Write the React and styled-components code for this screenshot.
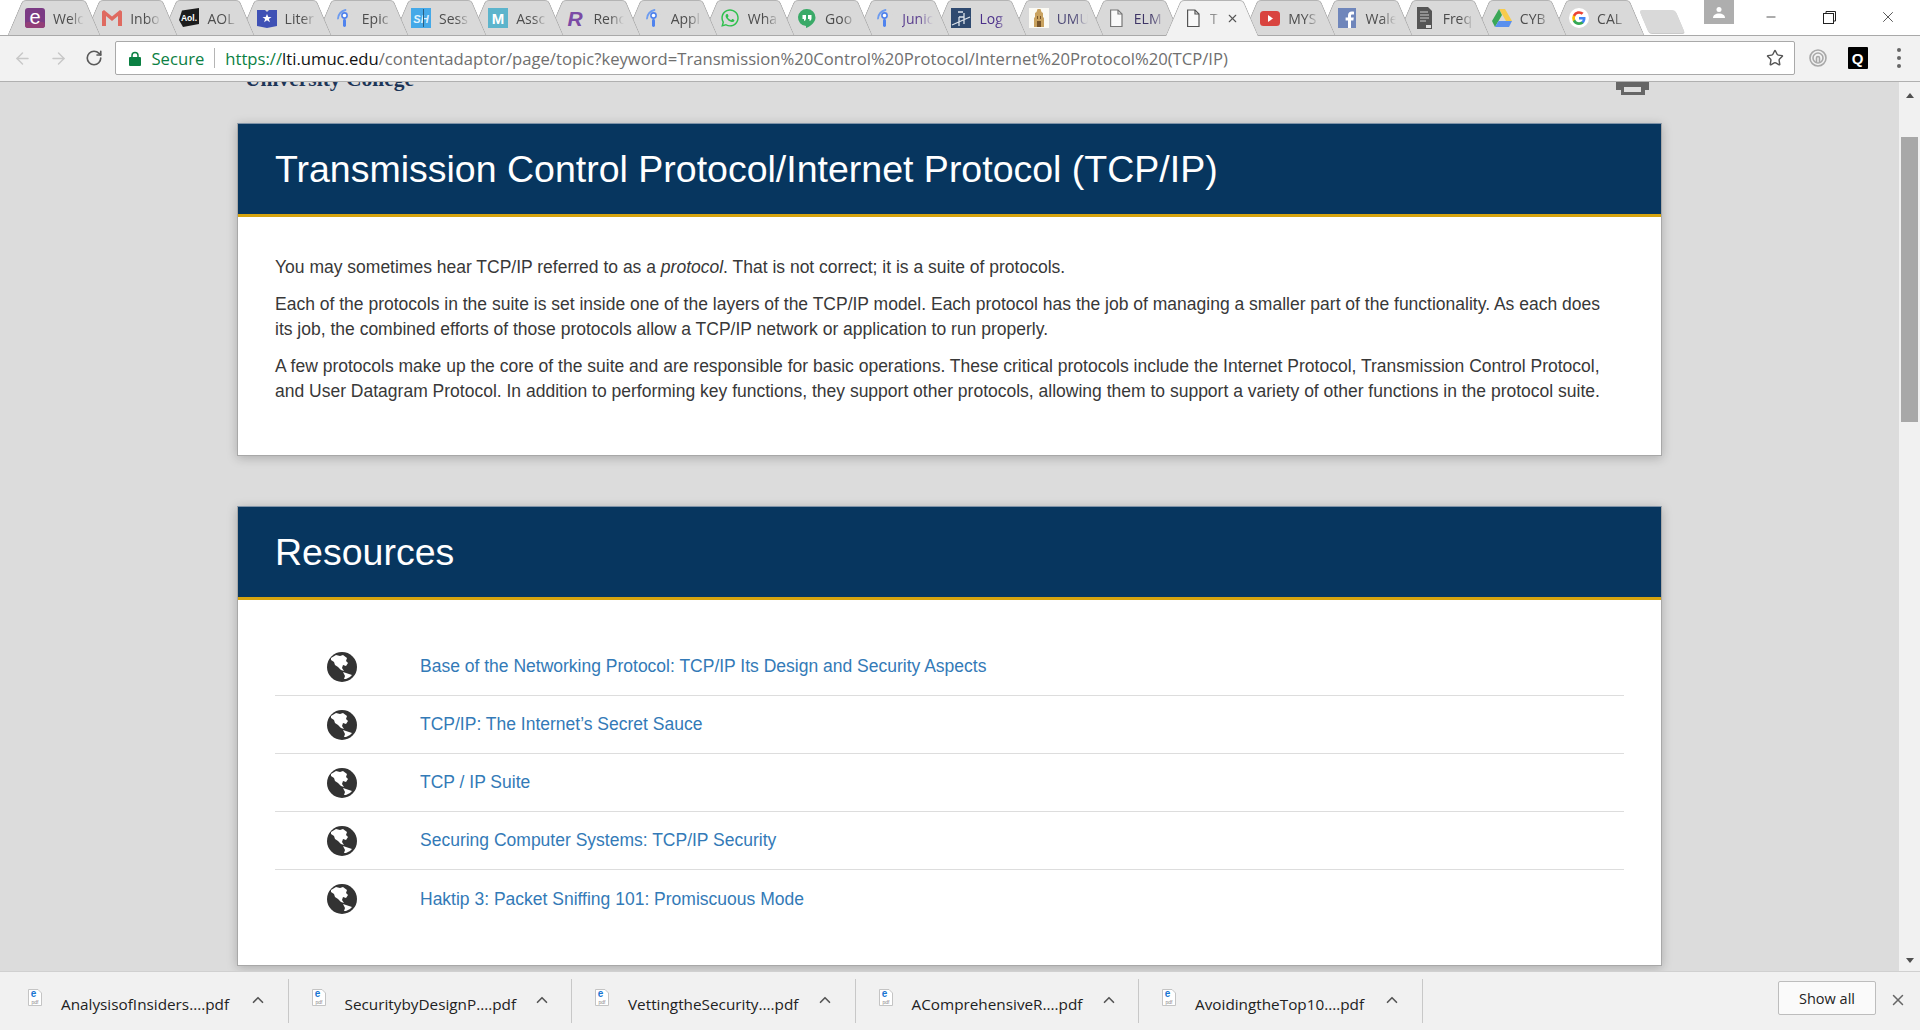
import React from 'react';
import styled, { createGlobalStyle } from 'styled-components';
import { ArrowLeft, ArrowRight, RotateCw, Star, ChevronUp, X, Minus } from 'lucide-react';
import { FaWhatsapp } from 'react-icons/fa';

const GlobalStyle = createGlobalStyle`
  html, body { margin: 0; padding: 0; height: 100%; overflow: hidden; }
  * { box-sizing: border-box; }
  body { font-family: "Liberation Sans", Arial, sans-serif; background: #dcdcdc; }
`;

const UI_FONT = '"Open Sans", "Noto Sans", sans-serif';

const Window = styled.div`
  width: 1920px;
  height: 1030px;
  display: flex;
  flex-direction: column;
  overflow: hidden;
`;

/* tab strip */
const TabStrip = styled.div`
  height: 36px;
  flex: none;
  display: flex;
  align-items: flex-end;
  padding-left: 7px;
  background: #fff;
  border-bottom: 1px solid #a9a9a9;
  position: relative;
`;

const Tab = styled.div`
  position: relative;
  z-index: ${p => (p.$active ? 50 : 40 - p.$index)};
  width: 93px;
  height: ${p => (p.$active ? '36px' : '35px')};
  margin-right: -15.8px;
  margin-bottom: ${p => (p.$active ? '-1px' : '0')};
  padding: 1px 0 0 18px;
  flex: none;
  display: flex;
  align-items: center;
  font-family: ${UI_FONT};
  font-size: 14px;
  color: ${p => p.$tint || '#4d4d4d'};

  &::before,
  &::after {
    content: '';
    position: absolute;
    top: 0;
    bottom: 0;
    width: 50%;
    background: ${p => (p.$active ? '#f2f2f2' : '#d9d9d9')};
    border-top: 1px solid #b4b4b4;
  }
  &::before {
    left: 8px;
    transform: skewX(-23deg);
    border-left: 1px solid #a9a9a9;
    border-top-left-radius: 4px;
  }
  &::after {
    right: 8px;
    transform: skewX(23deg);
    border-right: 1px solid #a9a9a9;
    border-top-right-radius: 4px;
  }
`;

const TabIcon = styled.span`
  position: relative;
  z-index: 1;
  width: 20px;
  height: 20px;
  flex: none;
  display: flex;
  align-items: center;
  justify-content: center;
  svg { display: block; }
`;

const TabTitle = styled.span`
  position: relative;
  z-index: 1;
  margin-left: 8px;
  width: 31px;
  overflow: hidden;
  white-space: nowrap;
  -webkit-mask-image: linear-gradient(to right, #000 55%, transparent 100%);
  mask-image: linear-gradient(to right, #000 55%, transparent 100%);
`;

const ActiveTitle = styled(TabTitle)`
  width: 9px;
  margin-left: 7px;
  opacity: .6;
`;

const TabClose = styled.span`
  position: relative;
  z-index: 1;
  margin-left: 7px;
  display: flex;
  color: #555;
`;

const NewTab = styled.div`
  margin: 0 0 2px 16px;
  width: 36px;
  height: 23px;
  flex: none;
  background: #d9d9d9;
  border-radius: 3px;
  transform: skewX(23deg);
  box-shadow: 0 1px 0 #c9c9c9;
`;

const WindowControls = styled.div`
  margin-left: auto;
  align-self: flex-start;
  display: flex;
  height: 35px;
  padding-right: 3px;
`;

const UserBadge = styled.div`
  width: 30px;
  height: 24px;
  margin-right: 8px;
  background: #aeaeae;
  display: flex;
  align-items: center;
  justify-content: center;
`;

const WinButton = styled.div`
  width: 58.5px;
  height: 34px;
  display: flex;
  align-items: center;
  justify-content: center;
  color: #222;
`;

/* toolbar */
const Toolbar = styled.div`
  height: 46px;
  flex: none;
  display: flex;
  align-items: center;
  padding: 0 0 1px 4px;
  background: #f2f2f2;
  border-bottom: 1px solid #b0b0b0;
`;

const NavButton = styled.div`
  width: 36px;
  display: flex;
  justify-content: center;
  color: ${p => (p.$enabled ? '#5a5a5a' : '#c8c8c8')};
`;

const Omnibox = styled.div`
  margin-left: 3px;
  width: 1680px;
  height: 34px;
  display: flex;
  align-items: center;
  padding: 0 10px 0 13px;
  background: #fff;
  border: 1px solid #a9a9a9;
  border-radius: 2px;
  font-family: ${UI_FONT};
  font-size: 16.65px;
  white-space: nowrap;
`;

const Secure = styled.span`
  margin-left: 10.5px;
  color: #0b8043;
`;

const OmniDivider = styled.span`
  width: 1px;
  height: 20px;
  margin: 0 10px;
  background: #b5b5b5;
`;

const Scheme = styled.span`
  color: #0b8043;
`;
const Host = styled.span`
  color: #111;
`;
const UrlRest = styled.span`
  color: #6f6f6f;
`;

const StarButton = styled.span`
  margin-left: auto;
  display: flex;
  color: #555;
`;

const ToolbarTail = styled.div`
  flex: 1;
  display: flex;
  align-items: center;
  justify-content: space-between;
  padding: 0 19px 0 13px;
`;

const ExtButton = styled.span`
  width: 20px;
  height: 22px;
  display: flex;
  align-items: center;
  justify-content: center;
`;

const QButton = styled.span`
  width: 20px;
  height: 22px;
  margin-right: 10px;
  background: #000;
  border-radius: 1px;
  color: #fff;
  font: bold 15px "Liberation Sans", sans-serif;
  display: flex;
  align-items: center;
  justify-content: center;
`;

const MenuDots = styled.span`
  width: 4px;
  display: flex;
  flex-direction: column;
  gap: 4px;
  i {
    width: 4px;
    height: 4px;
    border-radius: 50%;
    background: #666;
  }
`;

/* page */
const Viewport = styled.div`
  flex: 1;
  min-height: 0;
  display: flex;
`;

const Page = styled.main`
  flex: 1;
  overflow: hidden;
  background: #dcdcdc;
`;

const Wrap = styled.div`
  width: 1425px;
  margin: 0 auto;
`;

const SiteHeader = styled.header`
  height: 41px;
  display: flex;
  justify-content: space-between;
  align-items: flex-start;
  padding: 0 13px 0 8px;
`;

const Logo = styled.div`
  margin-top: -14px;
  font: bold 21.5px/22px "Liberation Serif", serif;
  color: #1d3557;
`;

const Card = styled.section`
  margin-bottom: 50px;
  background: #fff;
  border: 1px solid #a8a8a8;
  border-top-color: #7f93a8;
  box-shadow: 0 2px 10px rgba(0, 0, 0, .22);
`;

const CardHeader = styled.h1`
  margin: 0;
  height: 93px;
  padding: 0 37px;
  display: flex;
  align-items: center;
  background: #07365f;
  border-bottom: 3px solid #d6a40f;
  color: #fff;
  font-size: 37.5px;
  font-weight: 400;
`;

const Body = styled.div`
  padding: 38px 41px 51px 37px;
  font-size: 17.5px;
  line-height: 25px;
  color: #383838;
  p { margin: 0 0 12px; }
  p:last-child { margin: 0; }
`;

const ResourceList = styled.ul`
  list-style: none;
  margin: 0;
  padding: 38px 37px 37px;
`;

const Resource = styled.li`
  height: 58px;
  display: flex;
  align-items: center;
  padding-left: 52px;
  border-bottom: 1px solid #ddd;
  font-size: 17.5px;
  &:last-child { border-bottom: 0; }
`;

const ResourceLink = styled.a`
  margin-left: 63px;
  color: #337ab7;
  text-decoration: none;
`;

/* scrollbar */
const ScrollBar = styled.div`
  width: 21px;
  flex: none;
  display: flex;
  flex-direction: column;
  align-items: center;
  background: #f1f1f1;
`;

const ScrollArrow = styled.div`
  width: 0;
  height: 0;
  border-left: 4.5px solid transparent;
  border-right: 4.5px solid transparent;
  ${p => (p.$down
    ? 'border-top: 5px solid #505050; margin: auto 0 8px;'
    : 'border-bottom: 5px solid #505050; margin-top: 11px;')}
`;

const ScrollThumb = styled.div`
  width: 17px;
  height: 285px;
  margin-top: 39px;
  background: #a8a8a8;
`;

/* download shelf */
const Shelf = styled.footer`
  height: 59px;
  flex: none;
  display: flex;
  align-items: center;
  padding-left: 5px;
  background: #f1f1f1;
  border-top: 1px solid #d0d0d0;
  font-family: ${UI_FONT};
`;

const Download = styled.div`
  width: 283.5px;
  height: 44px;
  flex: none;
  display: flex;
  align-items: center;
  padding: 0 0 0 23px;
  border-right: 1px solid #c8c8c8;
  color: #222;
  font-size: 15.3px;
`;

const FileName = styled.span`
  margin: 6px 0 0 19px;
  width: 188px;
  white-space: nowrap;
`;

const Caret = styled.span`
  display: flex;
  margin-top: -2px;
  color: #555;
`;

const ShowAll = styled.button`
  margin-left: auto;
  width: 98px;
  height: 34px;
  margin-top: -6px;
  background: #fafafa;
  border: 1px solid #bdbdbd;
  border-radius: 2px;
  color: #222;
  font-family: ${UI_FONT};
  font-size: 14.5px;
`;

const ShelfClose = styled.span`
  width: 44px;
  margin-top: -2px;
  display: flex;
  justify-content: center;
  color: #666;
`;

/* favicons */
const Beacon = () => (
  <svg width="20" height="20" viewBox="0 0 20 20" fill="none">
    <path d="M4 10.5C4.5 6 7 3 11.5 2" stroke="#6d9cf0" strokeWidth="1.8" strokeLinecap="round" />
    <circle cx="10.5" cy="7.5" r="2.6" fill="#fff" stroke="#4f83ee" strokeWidth="1.6" />
    <rect x="9" y="11" width="3" height="8" rx="1.4" fill="#4f83ee" />
  </svg>
);

const PageGlyph = ({ stroke = '#777' }) => (
  <svg width="16" height="19" viewBox="0 0 16 19" fill="#fafafa" stroke={stroke} strokeWidth="1.2">
    <path d="M2.6 1H10l4 4v12.5H2.6z" />
    <path d="M10 1v4h4" fill="none" />
  </svg>
);

const Globe = () => (
  <svg width="30" height="30" viewBox="0 0 30 30">
    <circle cx="15" cy="15" r="15" fill="#333" />
    <path d="M4 6l5-3 4 1 3-1 4 3-1 3 2 2-2 3-3-1-1 3 2 3-3-1-3-3-3-2-1-3-3-2z" fill="#fff" />
    <path d="M16 20l3 1 3 1 3 1-2 2-4 2h-2l1-3z" fill="#fff" />
  </svg>
);

const favicons = {
  edu: (
    <svg width="20" height="20" viewBox="0 0 20 20">
      <rect width="20" height="20" rx="3" fill="#7b3b84" />
      <rect y="14" width="20" height="6" rx="3" fill="#933f78" />
      <text x="10" y="16" textAnchor="middle" fontFamily="Liberation Sans" fontSize="20" fill="#fff">e</text>
    </svg>
  ),
  gmail: (
    <svg width="20" height="16" viewBox="0 0 20 16">
      <path d="M0 1.5V16h4V6l6 5 6-5v10h4V1.5L18 0l-8 6.6L2 0z" fill="#df6a60" />
    </svg>
  ),
  aol: (
    <svg width="20" height="20" viewBox="0 0 20 20">
      <path d="M3 2.5 20 0v16L4 19 0 12z" fill="#1c1c1c" />
      <text x="10" y="13" textAnchor="middle" fontFamily="Liberation Sans" fontWeight="700" fontSize="8.5" fill="#fff">Aol.</text>
    </svg>
  ),
  shield: (
    <svg width="20" height="20" viewBox="0 0 20 20">
      <path d="M0 2h8l2 2 2-2h8v16l-10 2-10-2z" fill="#3f51b5" />
      <path d="m10 6 1.3 3h3.2l-2.6 2 1 3.2L10 12.3l-2.9 1.9 1-3.2-2.6-2h3.2z" fill="#fff" />
    </svg>
  ),
  sh: (
    <svg width="20" height="20" viewBox="0 0 20 20">
      <rect width="20" height="20" fill="#45a9e8" />
      <text x="10" y="15" textAnchor="middle" fontFamily="Liberation Sans" fontStyle="italic" fontWeight="700" fontSize="11" fill="#dff2ff">SH</text>
      <rect x="12" y="1" width="1" height="18" fill="#2b5f7f" />
    </svg>
  ),
  assoc: (
    <svg width="20" height="20" viewBox="0 0 20 20">
      <rect width="20" height="20" fill="#5cb4cc" />
      <text x="10" y="15.5" textAnchor="middle" fontFamily="Liberation Sans" fontWeight="700" fontSize="15" fill="#fff">M</text>
    </svg>
  ),
  r: (
    <svg width="20" height="20" viewBox="0 0 20 20">
      <text x="10" y="17.5" textAnchor="middle" fontFamily="Liberation Sans" fontStyle="italic" fontWeight="700" fontSize="21" fill="#7b4aa5">R</text>
    </svg>
  ),
  whatsapp: <FaWhatsapp size={20} color="#2fc04d" />,
  hangouts: (
    <svg width="20" height="20" viewBox="0 0 20 20">
      <path d="M10 1a8.5 8.5 0 0 0-1 17v2c5-2 9.5-6 9.5-10.5A8.5 8.5 0 0 0 10 1z" fill="#3aaa68" />
      <path d="M5.5 7h3.5v3.5q0 2-2 2.5v-2H5.5zM11 7h3.5v3.5q0 2-2 2.5v-2H11z" fill="#fff" />
    </svg>
  ),
  log: (
    <svg width="20" height="20" viewBox="0 0 20 20">
      <rect width="20" height="20" fill="#2f4a70" />
      <path d="M1 17 19 9M8 9v9M13 5v11M8 9h5M7 4h5" stroke="#dbe2ea" strokeWidth="1.3" fill="none" />
    </svg>
  ),
  umuc: (
    <svg width="20" height="20" viewBox="0 0 20 20">
      <rect width="20" height="20" fill="#fbfaf4" />
      <path d="M8.5 1h3l1 3 1.5 1v4l1 1v9H5v-9l1-1V5l1.5-1z" fill="#c9a25f" />
      <path d="M8 8h1v3H8zm3 0h1v3h-1zM8 13h4v6H8z" fill="#77552a" />
    </svg>
  ),
  page: <PageGlyph />,
  activePage: <PageGlyph stroke="#555" />,
  youtube: (
    <svg width="20" height="15" viewBox="0 0 20 15">
      <rect width="20" height="15" rx="3.5" fill="#d9443f" />
      <path d="m8 4 5 3.5L8 11z" fill="#fff" />
    </svg>
  ),
  facebook: (
    <svg width="20" height="20" viewBox="0 0 20 20">
      <rect width="18" height="20" x="1" fill="#6f86bb" />
      <path d="M14 20v-7.5h2.4l.4-3H14V7.8c0-.9.3-1.400 1.500-1.400H17V3.700c-.4 0-1.200-.1-2.200-.1-2.200 0-3.800 1.400-3.800 3.800v2.100H8.600v3H11V20z" fill="#fff" />
    </svg>
  ),
  freq: (
    <svg width="16" height="22" viewBox="0 0 16 22">
      <path d="M0 0h11l4 4v18H0z" fill="#555" />
      <path d="M3 5h8M3 8h9M3 11h9M3 14h6" stroke="#ccc" strokeWidth="1" />
      <path d="M9 18h5v3H9z" fill="#ddd" />
    </svg>
  ),
  drive: (
    <svg width="20" height="18" viewBox="0 0 20 18">
      <path d="M7 0h6l7 12h-6z" fill="#f7cb4d" />
      <path d="M7 0 0 12l3 6 7-12z" fill="#3aa757" />
      <path d="M6.5 12H20l-3 6H3z" fill="#5a90ee" />
    </svg>
  ),
  google: (
    <svg width="20" height="20" viewBox="0 0 20 20">
      <circle cx="10" cy="10" r="10" fill="#fff" />
      <path d="M16.5 10.2c0-.5 0-.9-.1-1.300H10v2.500h3.700a3.200 3.200 0 0 1-1.400 2.100v1.700h2.200c1.300-1.200 2-3 2-5z" fill="#4285f4" />
      <path d="M10 17c1.900 0 3.400-.6 4.500-1.700l-2.200-1.700c-.6.400-1.400.7-2.300.7-1.800 0-3.300-1.200-3.800-2.800H3.900v1.700A7 7 0 0 0 10 17z" fill="#34a853" />
      <path d="M6.200 11.500a4.200 4.200 0 0 1 0-2.900V6.900H3.900a7 7 0 0 0 0 6.300z" fill="#fbbc05" />
      <path d="M10 5.800c1 0 1.900.3 2.600 1l2-2A7 7 0 0 0 3.900 6.900l2.300 1.700C6.700 7 8.200 5.800 10 5.800z" fill="#ea4335" />
    </svg>
  ),
};

const TABS = [
  { icon: 'edu', title: 'Welc' },
  { icon: 'gmail', title: 'Inbo' },
  { icon: 'aol', title: 'AOL' },
  { icon: 'shield', title: 'Liter' },
  { icon: 'beacon', title: 'Epic' },
  { icon: 'sh', title: 'Sess' },
  { icon: 'assoc', title: 'Assc' },
  { icon: 'r', title: 'Renc' },
  { icon: 'beacon', title: 'Appl' },
  { icon: 'whatsapp', title: 'Wha' },
  { icon: 'hangouts', title: 'Goo' },
  { icon: 'beacon', title: 'Junic', tint: '#5b3f8f' },
  { icon: 'log', title: 'Log', tint: '#4b2f8a' },
  { icon: 'umuc', title: 'UMU', tint: '#4f4a78' },
  { icon: 'page', title: 'ELM', tint: '#3e3566' },
  { icon: 'activePage', title: 'T', active: true },
  { icon: 'youtube', title: 'MYS' },
  { icon: 'facebook', title: 'Wale' },
  { icon: 'freq', title: 'Freq' },
  { icon: 'drive', title: 'CYB' },
  { icon: 'google', title: 'CAL' },
];

const RESOURCES = [
  'Base of the Networking Protocol: TCP/IP Its Design and Security Aspects',
  'TCP/IP: The Internet’s Secret Sauce',
  'TCP / IP Suite',
  'Securing Computer Systems: TCP/IP Security',
  'Haktip 3: Packet Sniffing 101: Promiscuous Mode',
];

const DOWNLOADS = [
  'AnalysisofInsiders....pdf',
  'SecuritybyDesignP....pdf',
  'VettingtheSecurity....pdf',
  'AComprehensiveR....pdf',
  'AvoidingtheTop10....pdf',
];

const PdfIcon = styled(({ className }) => (
  <svg className={className} width="14" height="17" viewBox="0 0 14 17">
    <path d="M.5.5H10L13.5 4v12.500H.5z" fill="#fff" stroke="#c4c4c4" />
    <text x="5.5" y="8" textAnchor="middle" fontFamily="Liberation Sans" fontWeight="700" fontSize="10" fill="#1976d2">e</text>
    <text x="7" y="14.5" textAnchor="middle" fontFamily="Liberation Sans" fontSize="5" fill="#888">pdf</text>
  </svg>
))`
  flex: none;
  margin-top: -7px;
`;

const TabList = () => TABS.map((tab, i) => (
  <Tab key={i} $index={i} $active={tab.active} $tint={tab.tint}>
    <TabIcon>{tab.icon === 'beacon' ? <Beacon /> : favicons[tab.icon]}</TabIcon>
    {tab.active ? (
      <>
        <ActiveTitle>{tab.title}</ActiveTitle>
        <TabClose><X size={13} strokeWidth={2} /></TabClose>
      </>
    ) : (
      <TabTitle>{tab.title}</TabTitle>
    )}
  </Tab>
));

export default function App() {
  return (
    <Window>
      <GlobalStyle />
      <TabStrip>
        <TabList />
        <NewTab />
        <WindowControls>
          <UserBadge>
            <svg width="12" height="12" viewBox="0 0 12 12" fill="#fff">
              <circle cx="6" cy="3.5" r="2.5" />
              <path d="M0 12c0-3 2.5-4.5 6-4.5S12 9 12 12z" />
            </svg>
          </UserBadge>
          <WinButton><Minus size={14} strokeWidth={1.3} /></WinButton>
          <WinButton>
            <svg width="13" height="13" viewBox="0 0 13 13" fill="none" stroke="#222" strokeWidth="1">
              <rect x=".5" y="2.5" width="10" height="10" />
              <path d="M3 2.5V.5h9.5V10h-2" />
            </svg>
          </WinButton>
          <WinButton><X size={18} strokeWidth={1} /></WinButton>
        </WindowControls>
      </TabStrip>

      <Toolbar>
        <NavButton><ArrowLeft size={19} strokeWidth={1.8} /></NavButton>
        <NavButton><ArrowRight size={19} strokeWidth={1.8} /></NavButton>
        <NavButton $enabled><RotateCw size={18} strokeWidth={2.2} /></NavButton>
        <Omnibox>
          <svg width="12" height="15" viewBox="0 0 12 15">
            <path d="M3 7V4.5a3 3 0 0 1 6 0V7" fill="none" stroke="#0b8043" strokeWidth="1.5" />
            <rect y="6" width="12" height="9" rx="1" fill="#0b8043" />
          </svg>
          <Secure>Secure</Secure>
          <OmniDivider />
          <span>
            <Scheme>https://</Scheme>
            <Host>lti.umuc.edu</Host>
            <UrlRest>/contentadaptor/page/topic?keyword=Transmission%20Control%20Protocol/Internet%20Protocol%20(TCP/IP)</UrlRest>
          </span>
          <StarButton><Star size={18} strokeWidth={1.9} /></StarButton>
        </Omnibox>
        <ToolbarTail>
          <ExtButton>
            <svg width="18" height="18" viewBox="0 0 18 18" fill="none" stroke="#a8a8a8">
              <circle cx="9" cy="9" r="8" strokeWidth="1.6" />
              <circle cx="9" cy="9" r="5" strokeWidth="1.6" />
              <path d="M7.5 13V9a1.5 1.5 0 0 1 3 0v4" strokeWidth="1.6" />
            </svg>
          </ExtButton>
          <QButton>Q</QButton>
          <MenuDots><i /><i /><i /></MenuDots>
        </ToolbarTail>
      </Toolbar>

      <Viewport>
        <Page>
          <Wrap>
            <SiteHeader>
              <Logo>University College</Logo>
              <svg width="33" height="13" viewBox="0 0 33 13">
                <path d="M0 0h33v8h-4v5H5V8H0z" fill="#666" />
                <rect x="8" y="5" width="17" height="5" fill="#dedede" />
              </svg>
            </SiteHeader>

            <Card>
              <CardHeader>Transmission Control Protocol/Internet Protocol (TCP/IP)</CardHeader>
              <Body>
                <p>You may sometimes hear TCP/IP referred to as a <em>protocol</em>. That is not correct; it is a suite of protocols.</p>
                <p>Each of the protocols in the suite is set inside one of the layers of the TCP/IP model. Each protocol has the job of managing a smaller part of the functionality. As each does its job, the combined efforts of those protocols allow a TCP/IP network or application to run properly.</p>
                <p>A few protocols make up the core of the suite and are responsible for basic operations. These critical protocols include the Internet Protocol, Transmission Control Protocol, and User Datagram Protocol. In addition to performing key functions, they support other protocols, allowing them to support a variety of other functions in the protocol suite.</p>
              </Body>
            </Card>

            <Card>
              <CardHeader as="h2">Resources</CardHeader>
              <ResourceList>
                {RESOURCES.map(title => (
                  <Resource key={title}>
                    <Globe />
                    <ResourceLink href="#">{title}</ResourceLink>
                  </Resource>
                ))}
              </ResourceList>
            </Card>
          </Wrap>
        </Page>
        <ScrollBar>
          <ScrollArrow />
          <ScrollThumb />
          <ScrollArrow $down />
        </ScrollBar>
      </Viewport>

      <Shelf>
        {DOWNLOADS.map(name => (
          <Download key={name}>
            <PdfIcon />
            <FileName>{name}</FileName>
            <Caret><ChevronUp size={18} strokeWidth={2.2} /></Caret>
          </Download>
        ))}
        <ShowAll>Show all</ShowAll>
        <ShelfClose><X size={18} strokeWidth={2} /></ShelfClose>
      </Shelf>
    </Window>
  );
}
